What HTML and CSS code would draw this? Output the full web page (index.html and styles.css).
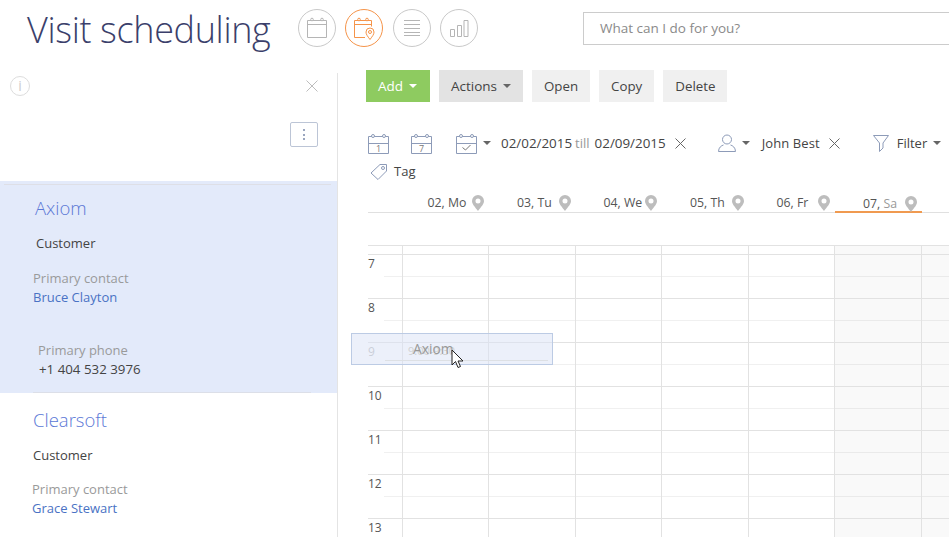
FILE: index.html
```html
<!DOCTYPE html>
<html lang="en">
<head>
<meta charset="utf-8">
<title>Visit scheduling</title>
<link rel="stylesheet" href="styles.css">
</head>
<body>
<div class="page">
  <header class="top">
    <h1 class="title">Visit scheduling</h1>
    <div class="views">
      <button class="view"><svg width="24" height="24" viewBox="0 0 24 24"><path d="M2.500 4.500h19v17h-19zM2.500 8.500h19" fill="none" stroke="#b5b5b5"/><circle cx="7" cy="3.500" r="1.300" fill="#fff" stroke="#b5b5b5"/><circle cx="17" cy="3.500" r="1.300" fill="#fff" stroke="#b5b5b5"/></svg></button>
      <button class="view active"><svg width="24" height="24" viewBox="0 0 24 24"><path d="M13 21.500H2.500v-17h17v6M2.500 8.500h17" fill="none" stroke="#f5944a"/><circle cx="7" cy="3.500" r="1.300" fill="#fff" stroke="#f5944a"/><circle cx="15" cy="3.500" r="1.300" fill="#fff" stroke="#f5944a"/><path d="M18 23.500c-2.500-3.500-4-5-4-7.500a4 4 0 0 1 8 0c0 2.500-1.500 4-4 7.500z" fill="#fff" stroke="#f5944a"/><circle cx="18" cy="16" r="1.500" fill="none" stroke="#f5944a"/></svg></button>
      <button class="view"><svg width="18" height="18" viewBox="0 0 18 18"><path d="M1 1.500h16M1 5.500h16M1 9.500h16M1 13.500h16M1 16.500h16" fill="none" stroke="#b5b5b5"/></svg></button>
      <button class="view"><svg width="20" height="20" viewBox="0 0 20 20"><path d="M1.500 11.500h4v7h-4zM8.500 7.500h4v11h-4zM15 2.500h4v16h-4z" fill="none" stroke="#b5b5b5"/></svg></button>
    </div>
    <div class="search">What can I do for you?</div>
  </header>
  <div class="body">
    <aside class="side">
      <div class="side-head">
        <div class="side-tools">
          <span class="info">i</span>
          <svg width="12" height="12" viewBox="0 0 12 12"><path d="M.5.500l11 11M11.500.500l-11 11" stroke="#bdbdbd" fill="none"/></svg>
        </div>
        <div class="side-menu"><button class="dots"><i></i><i></i><i></i></button></div>
      </div>
      <article class="card selected">
        <h2 class="card-name">Axiom</h2>
        <div class="card-type">Customer</div>
        <div class="label">Primary contact</div>
        <a class="link">Bruce Clayton</a>
        <div class="label phone-label">Primary phone</div>
        <div class="phone">+1 404 532 3976</div>
      </article>
      <article class="card second">
        <h2 class="card-name">Clearsoft</h2>
        <div class="card-type">Customer</div>
        <div class="label">Primary contact</div>
        <a class="link">Grace Stewart</a>
      </article>
    </aside>
    <main class="main">
      <div class="toolbar">
        <button class="btn add">Add<span class="caret white"></span></button>
        <button class="btn actions">Actions<span class="caret"></span></button>
        <button class="btn">Open</button>
        <button class="btn">Copy</button>
        <button class="btn">Delete</button>
      </div>
      <div class="filters">
        <svg class="ic" width="21" height="21" viewBox="0 0 21 21"><path d="M.5 3.500h20v17H.5zM.5 10.500h20" fill="none" stroke="#8d9bb8"/><circle cx="5" cy="3" r="1.500" fill="#fff" stroke="#8d9bb8"/><circle cx="16" cy="3" r="1.500" fill="#fff" stroke="#8d9bb8"/><text class="ic-num" x="10.500" y="18.500">1</text></svg>
        <svg class="ic" width="21" height="21" viewBox="0 0 21 21"><path d="M.5 3.500h20v17H.5zM.5 10.500h20" fill="none" stroke="#8d9bb8"/><circle cx="5" cy="3" r="1.500" fill="#fff" stroke="#8d9bb8"/><circle cx="16" cy="3" r="1.500" fill="#fff" stroke="#8d9bb8"/><text class="ic-num" x="10.500" y="18.500">7</text></svg>
        <div class="picker">
          <svg width="21" height="21" viewBox="0 0 21 21"><path d="M.5 3.500h20v17H.5zM.5 10.500h20" fill="none" stroke="#8d9bb8"/><circle cx="5" cy="3" r="1.500" fill="#fff" stroke="#8d9bb8"/><circle cx="16" cy="3" r="1.500" fill="#fff" stroke="#8d9bb8"/><path d="M6.500 14.500l3 2.500 5-5" fill="none" stroke="#777"/></svg>
          <span class="caret"></span>
        </div>
        <div class="dates"><span>02/02/2015</span><span class="till">till</span><span>02/09/2015</span></div>
        <svg class="clear" width="11" height="11" viewBox="0 0 11 11"><path d="M.5.500l10 10M10.500.500l-10 10" stroke="#666" fill="none"/></svg>
        <div class="owner">
          <svg width="18" height="18" viewBox="0 0 18 18"><circle cx="9" cy="5.500" r="4.500" fill="none" stroke="#8d9bb8"/><path d="M.5 17.500c0-4 3-6 5-6.500M17.500 17.500c0-4-3-6-5-6.500M.5 17.500h17" fill="none" stroke="#8d9bb8"/></svg>
          <span class="caret"></span>
          <span class="owner-name">John Best</span>
          <svg class="clear-owner" width="11" height="11" viewBox="0 0 11 11"><path d="M.5.500l10 10M10.500.500l-10 10" stroke="#666" fill="none"/></svg>
        </div>
        <div class="filter">
          <svg width="16" height="17" viewBox="0 0 16 17"><path d="M.5.500h15L10 8v5l-3.500 3.500V8z" fill="none" stroke="#8d9bb8" stroke-linejoin="round"/></svg>
          <span>Filter</span><span class="caret"></span>
        </div>
      </div>
      <div class="tagrow">
        <svg width="18" height="17" viewBox="0 0 18 17"><path d="M1 10L10 1.500h6.500V8L8 16.500z" fill="none" stroke="#8d9bb8"/><circle cx="13" cy="5" r="1.500" fill="none" stroke="#8d9bb8"/></svg>
        <span>Tag</span>
      </div>
      <div class="days">
        <div class="day d1"><span>02, Mo</span><svg class="pin" width="12" height="16" viewBox="0 0 12 16"><path fill-rule="evenodd" d="M6 0a6 6 0 0 1 6 6c0 3-3 6-6 10C3 12 0 9 0 6a6 6 0 0 1 6-6zm0 3.500a2.500 2.500 0 1 0 0 5 2.500 2.500 0 0 0 0-5z" fill="#bdbdbd"/></svg></div>
        <div class="day"><span>03, Tu</span><svg class="pin" width="12" height="16" viewBox="0 0 12 16"><path fill-rule="evenodd" d="M6 0a6 6 0 0 1 6 6c0 3-3 6-6 10C3 12 0 9 0 6a6 6 0 0 1 6-6zm0 3.500a2.500 2.500 0 1 0 0 5 2.500 2.500 0 0 0 0-5z" fill="#bdbdbd"/></svg></div>
        <div class="day"><span>04, We</span><svg class="pin" width="12" height="16" viewBox="0 0 12 16"><path fill-rule="evenodd" d="M6 0a6 6 0 0 1 6 6c0 3-3 6-6 10C3 12 0 9 0 6a6 6 0 0 1 6-6zm0 3.500a2.500 2.500 0 1 0 0 5 2.500 2.500 0 0 0 0-5z" fill="#bdbdbd"/></svg></div>
        <div class="day"><span>05, Th</span><svg class="pin" width="12" height="16" viewBox="0 0 12 16"><path fill-rule="evenodd" d="M6 0a6 6 0 0 1 6 6c0 3-3 6-6 10C3 12 0 9 0 6a6 6 0 0 1 6-6zm0 3.500a2.500 2.500 0 1 0 0 5 2.500 2.500 0 0 0 0-5z" fill="#bdbdbd"/></svg></div>
        <div class="day"><span>06, Fr</span><svg class="pin" width="12" height="16" viewBox="0 0 12 16"><path fill-rule="evenodd" d="M6 0a6 6 0 0 1 6 6c0 3-3 6-6 10C3 12 0 9 0 6a6 6 0 0 1 6-6zm0 3.500a2.500 2.500 0 1 0 0 5 2.500 2.500 0 0 0 0-5z" fill="#bdbdbd"/></svg></div>
        <div class="day today"><span>07, <em>Sa</em></span><svg class="pin" width="12" height="16" viewBox="0 0 12 16"><path fill-rule="evenodd" d="M6 0a6 6 0 0 1 6 6c0 3-3 6-6 10C3 12 0 9 0 6a6 6 0 0 1 6-6zm0 3.500a2.500 2.500 0 1 0 0 5 2.500 2.500 0 0 0 0-5z" fill="#bdbdbd"/></svg></div>
      </div>
      <div class="allday"></div>
      <div class="grid">
        <div class="row first"><b></b><i></i><i></i><i></i><i></i><i></i><i class="we"></i><i class="we"></i></div>
        <div class="row"><b>7</b><i></i><i></i><i></i><i></i><i></i><i class="we"></i><i class="we"></i></div>
        <div class="row"><b>8</b><i></i><i></i><i></i><i></i><i></i><i class="we"></i><i class="we"></i></div>
        <div class="row"><b class="faded">9</b><i></i><i></i><i></i><i></i><i></i><i class="we"></i><i class="we"></i></div>
        <div class="row"><b>10</b><i></i><i></i><i></i><i></i><i></i><i class="we"></i><i class="we"></i></div>
        <div class="row"><b>11</b><i></i><i></i><i></i><i></i><i></i><i class="we"></i><i class="we"></i></div>
        <div class="row"><b>12</b><i></i><i></i><i></i><i></i><i></i><i class="we"></i><i class="we"></i></div>
        <div class="row"><b>13</b><i></i><i></i><i></i><i></i><i></i><i class="we"></i><i class="we"></i></div>
      </div>
    </main>
  </div>
  <div class="ghost"><span class="ghost-time">9:00-9:30</span><span class="ghost-name">Axiom</span></div>
  <svg class="cursor" width="14" height="20" viewBox="0 0 14 20"><path d="M1 1v15l3.500-3.500L7 18.500l2.500-1-2.500-5.500h5z" fill="#fff" stroke="#222"/></svg>
</div>
</body>
</html>
```
FILE: styles.css
```css
* { box-sizing: border-box; }
html, body { margin: 0; height: 100%; overflow: hidden; background: #fff; }
body { font-family: "Open Sans", "Liberation Sans", sans-serif; font-size: 13px; color: #444; }
.page { position: relative; width: 949px; height: 537px; overflow: hidden; }
button { font: inherit; cursor: pointer; }

.top { display: flex; align-items: flex-start; height: 73px; }
.title { margin: 6px 0 0 27px; width: 271px; font-size: 36px; line-height: 48px; font-weight: 300; color: #3b3f6b; letter-spacing: -.35px; white-space: nowrap; }
.views { display: flex; gap: 9.300px; margin-top: 9px; width: 285px; }
.view { width: 38px; height: 38px; border: 1px solid #c9c9c9; border-radius: 50%; background: #fff; padding: 0; display: flex; align-items: center; justify-content: center; }
.view.active { border-color: #f5944a; }
.search { flex: 1; margin-top: 12px; height: 33px; border: 1px solid #ccc; border-right: 0; padding: 0 16px; line-height: 31px; font-size: 13.500px; color: #8a8a8a; }

.body { display: flex; height: 464px; }
.side { width: 338px; flex: none; border-right: 1px solid #e4e4e4; }
.side-head { height: 108px; position: relative; }
.side-tools { display: flex; justify-content: space-between; align-items: center; padding: 3px 19px 0 10px; }
.info { width: 20px; height: 20px; border: 1px solid #ddd; border-radius: 50%; display: block; text-align: center; font-size: 14px; line-height: 18px; color: #ccc; }
.side-menu { display: flex; justify-content: flex-end; padding: 26px 19px 0 0; }
.dots { width: 28px; height: 25px; border: 1px solid #bcc5d6; border-radius: 2px; background: #fff; padding: 6px 0; display: flex; flex-direction: column; align-items: center; justify-content: space-between; }
.dots i { width: 2px; height: 2px; background: #9aa6bf; display: block; }

.card-name { margin: 0; font-size: 18.500px; line-height: 26px; font-weight: 300; color: #5b78d6; }
.card-type { font-size: 13px; line-height: 18px; color: #444; }
.label { font-size: 13px; line-height: 19px; color: #9a9a9a; }
.link { display: block; font-size: 13px; line-height: 19px; color: #4a72c4; }
.card.selected { height: 212px; background: #e3eafa; padding: 14px 0 0 33px; position: relative; }
.card.selected::before { content: ""; position: absolute; left: 4px; right: 6px; top: 3px; border-top: 1px solid #dedfe6; }
.card.selected::after { content: ""; position: absolute; left: 33px; right: 26px; bottom: 0; border-top: 1px solid #dcdfe8; }
.selected .card-name { margin-left: 2px; }
.selected .card-type { margin: 13px 0 0 3px; }
.selected .label { margin-top: 17px; }
.phone-label.label { margin: 34px 0 0 5px; }
.phone { margin-left: 6px; font-size: 13.300px; line-height: 19px; color: #444; }
.card.second { padding: 14px 0 0 32px; }
.second .card-name { margin-left: 1px; }
.second .card-type { margin: 13px 0 0 1px; }
.second .label { margin-top: 16px; }

.main { flex: 1; min-width: 0; }
.toolbar { display: flex; gap: 9px; padding: 0 0 0 28px; margin-top: -3px; height: 32px; }
.btn { height: 32px; border: 0; padding: 0 12px; background: #f0f0f0; color: #444; font-size: 13.300px; white-space: nowrap; display: flex; align-items: center; }
.btn.add { background: #8ecb60; color: #fff; width: 64px; font-size: 13.500px; font-weight: 500; }
.btn.actions { background: #e3e3e3; width: 84px; font-size: 13.500px; }
.caret { display: inline-block; width: 0; height: 0; border: 4px solid transparent; border-top-color: #666; border-bottom: 0; margin-left: 6px; }
.caret.white { border-top-color: #fff; }

.filters { display: flex; align-items: center; padding-left: 30px; margin-top: 29px; height: 24px; white-space: nowrap; }
.ic { margin-right: 22px; }
.ic-num { font-size: 9px; fill: #777; text-anchor: middle; }
.picker { display: flex; align-items: center; margin-left: 2px; }
.dates { display: flex; gap: 3px; margin-left: 10px; font-size: 13.400px; color: #444; }
.dates span:nth-child(3) { margin-left: 2px; }
.till { color: #999; font-size: 13px; }
.clear { margin-left: 9px; }
.owner { display: flex; align-items: center; margin-left: 32px; }
.owner .caret { margin-left: 6px; }
.owner-name { margin-left: 12px; font-size: 13px; letter-spacing: .1px; }
.clear-owner { margin-left: 9px; }
.filter { display: flex; align-items: center; margin-left: 33px; font-size: 13px; }
.filter span:first-of-type { margin-left: 8px; }

.tagrow { display: flex; align-items: center; gap: 6px; padding-left: 32px; margin-top: 4px; height: 24px; font-size: 13px; }

.days { display: flex; margin-top: 8px; height: 22px; margin-left: 30px; padding-left: 34.500px; border-bottom: 1px solid #e0e0e0; }
.day { width: 86.500px; height: 21px; display: flex; justify-content: space-between; align-items: center; padding: 2px 5px 0 28px; font-size: 12.300px; color: #555; }
.day.d1 { padding-left: 25px; }
.day em { font-style: normal; color: #999; }
.today { border-bottom: 2px solid #f09a50; height: 22px; padding-top: 5px; }

.allday { height: 32px; margin-left: 30px; }
.grid { margin-left: 30px; }
.row { display: grid; grid-template-columns: 34.500px repeat(7, 86.500px); height: 44px; border-top: 1px solid #e2e2e2; background: linear-gradient(#f0f0f0, #f0f0f0) no-repeat 16px 21px / 100% 1px; }
.row.first { height: 9px; background: none; }
.row b { font-weight: 400; font-size: 12px; line-height: 18px; padding-top: 0; color: #555; border-right: 1px solid #e2e2e2; }
.row i { display: block; border-right: 1px solid #e2e2e2; }
.row i.we { background: rgba(0, 0, 0, .025); }
.row b.faded { color: #bbb; }

.ghost { position: absolute; left: 351px; top: 333px; width: 202px; height: 32px; background: rgba(218, 226, 246, .5); border: 1px solid #bccbe4; }
.ghost::after { content: ""; position: absolute; left: 33px; right: 4px; top: 26px; border-top: 1px solid #dde0e4; }
.ghost-name { position: absolute; left: 61px; top: 5px; font-size: 13.800px; line-height: 20px; color: #999; }
.ghost-time { position: absolute; left: 56px; top: 9px; font-size: 11px; line-height: 16px; color: #d0d0d0; }
.cursor { position: absolute; left: 451px; top: 349px; }
```
